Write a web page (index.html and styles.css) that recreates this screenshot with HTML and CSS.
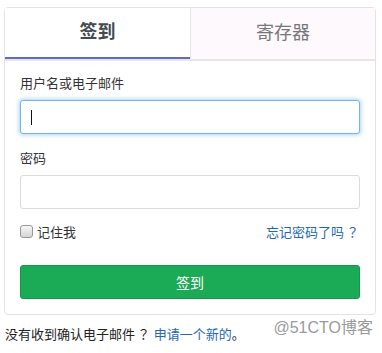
FILE: index.html
```html
<!DOCTYPE html>
<html>

<head>
    <title>签到</title>
    <link rel="stylesheet" href="styles.css">
</head>

<body>
    <div class="card">
        <div class="tabs">
            <div class="tab active">签到</div>
            <div class="tab">寄存器</div>
        </div>
        <form class="form">
            <div class="group">
                <label class="label">用户名或电子邮件</label>
                <div class="field">
                    <input class="input focused" type="text">
                    <span class="caret"></span>
                </div>
            </div>
            <div class="group">
                <label class="label">密码</label>
                <input class="input" type="password">
            </div>
            <div class="row">
                <label class="remember"><input class="check" type="checkbox"> 记住我</label>
                <a class="link" href="#">忘记密码了吗<span class="q">？</span></a>
            </div>
            <button class="submit" type="button">签到</button>
        </form>
    </div>
    <p class="note">没有收到确认电子邮件<span class="q">？</span> <a class="link" href="#">申请一个新的</a>。</p>
    <div class="watermark">@51CTO博客</div>
</body>

</html>
```

FILE: styles.css
```css
body {
    font-family: "Liberation Sans", "Noto Sans CJK SC", sans-serif;
    font-size: 13px;
    color: #333;
    margin: 0;
    padding: 7px 6px 0 4px;
    background-color: #ffffff;
    position: relative;
    height: 346px;
}

.card {
    border: 1px solid #e3e3e3;
    border-radius: 4px;
    width: 370px;
}

.tabs {
    display: flex;
    border-bottom: 2px solid #e6e6e6;
}

.tab {
    flex: 1;
    height: 51px;
    line-height: 51px;
    text-align: center;
    font-size: 18px;
    color: #777;
    background-color: #fdf9fd;
    border-left: 1px solid #e6e6e6;
    box-sizing: border-box;
}

.tab.active {
    flex: 0 0 185px;
    border-left: none;
    font-weight: bold;
    color: #444a50;
    background-color: #ffffff;
    border-bottom: 2px solid #6666cc;
    line-height: 49px;
}

.form {
    padding: 14px 15px 15px 15px;
}

.group {
    margin-bottom: 16px;
}

.label {
    display: block;
    line-height: 18px;
    margin-bottom: 7px;
    color: #333;
}

.field {
    position: relative;
}

.input {
    display: block;
    width: 100%;
    height: 34px;
    box-sizing: border-box;
    border: 1px solid #dcdcdc;
    border-radius: 3px;
    padding: 6px 10px;
    font-size: 13px;
    outline: none;
}

.input.focused {
    border-color: #74b4ec;
    box-shadow: 0 0 4px 1px rgba(102, 175, 233, 0.55);
}

/* text cursor of the focused field */
.caret {
    position: absolute;
    left: 11px;
    top: 10px;
    width: 1px;
    height: 15px;
    background-color: #111;
}

.row {
    display: flex;
    justify-content: space-between;
    align-items: center;
    height: 20px;
    margin-top: -4px;
    padding-right: 1px;
}

.remember {
    display: flex;
    align-items: center;
    gap: 4px;
    color: #333;
}

.check {
    appearance: none;
    width: 13px;
    height: 13px;
    margin: 0;
    border: 1px solid #999;
    border-radius: 3px;
    background: linear-gradient(#f6f6f6, #d6d6d6);
}

/* full-width question mark, centred in its cell */
.q {
    font-family: "Noto Sans CJK TC", sans-serif;
    padding-left: 2px;
}

.link {
    color: #1e68b5;
    text-decoration: none;
}

.submit {
    display: block;
    width: 100%;
    height: 34px;
    margin-top: 24px;
    border: 1px solid #17954b;
    border-radius: 3px;
    background-color: #1baa55;
    color: #ffffff;
    font-family: inherit;
    font-size: 14px;
}

.note {
    margin: 10px 0 0 1px;
    line-height: 18px;
    color: #222;
}

.watermark {
    position: absolute;
    right: 9px;
    top: 314px;
    font-size: 16px;
    color: #9a9a9a;
    text-shadow: 0 0 1px #fff;
}
```
